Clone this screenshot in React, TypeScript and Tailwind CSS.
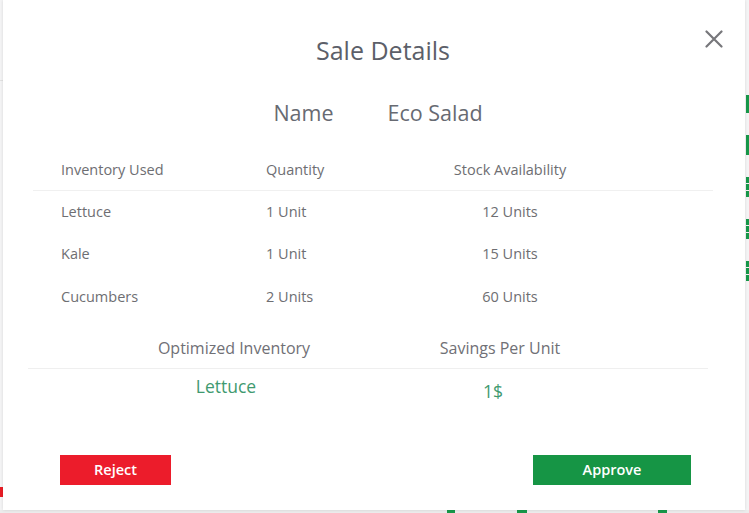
const rows = [
  { item: "Lettuce", qty: "1 Unit", stock: "12 Units" },
  { item: "Kale", qty: "1 Unit", stock: "15 Units" },
  { item: "Cucumbers", qty: "2 Units", stock: "60 Units" },
];

const SideMarks = () => (
  <div className="w-[4px] flex flex-col pt-[95px] gap-[22px]">
    <div className="h-[18px] w-[3px] ml-[1px] bg-[#17984a]" />
    <div className="h-[20px] w-[3px] ml-[1px] bg-[#17984a]" />
    <div className="h-[20px] w-[3px] ml-[1px] border-l-[3px] border-dashed border-[#17984a]" />
    <div className="h-[20px] w-[3px] ml-[1px] border-l-[3px] border-dashed border-[#17984a]" />
    <div className="h-[20px] w-[3px] ml-[1px] border-l-[3px] border-dashed border-[#17984a]" />
  </div>
);

export default function App() {
  return (
    <div
      className="w-[749px] h-[513px] overflow-hidden bg-[#f4f4f5] flex flex-col"
      style={{ fontFamily: '"Open Sans", "Liberation Sans", sans-serif' }}
    >
      <div className="flex h-[510px]">
        <div className="w-[3px] flex flex-col">
          <div className="mt-[80px] h-px bg-[#e2e2e2]" />
          <div className="mt-[406px] h-[10px] bg-[#e81c24]" />
        </div>
        <div className="relative w-[742px] h-[510px] bg-white shadow-[0_0_3px_rgba(0,0,0,0.12)] text-[#6e6e72] flex flex-col">
          {/* close */}
          <button className="absolute right-[22px] top-[30px] text-[#77777b]">
            <svg width="18" height="18" viewBox="0 0 18 18" fill="none" stroke="currentColor" strokeWidth="2.2" strokeLinecap="round">
              <path d="M1.5 1.5L16.5 16.5M16.5 1.5L1.5 16.5" />
            </svg>
          </button>

          <h1 className="pt-[33px] pl-[18px] text-center text-[25px] leading-[34px] text-[#5c5f69]">
            Sale Details
          </h1>

          <div className="mt-[32px] flex justify-center gap-[54px] text-[21.5px] leading-[28px] text-[#676a72] pl-[8px]">
            <span>Name</span>
            <span>Eco Salad</span>
          </div>

          <div className="mt-[22px] ml-[30px] mr-[32px]">
            <div className="flex items-center h-[42px] border-b border-[#f0f0f0] pl-[28px] text-[14.5px]">
              <span className="w-[205px]">Inventory Used</span>
              <span className="w-[174px]">Quantity</span>
              <span className="w-[140px] text-center">Stock Availability</span>
            </div>
            {rows.map((r, i) => (
              <div key={r.item} className={`flex items-center pl-[28px] text-[14.5px] ${i === 2 ? "h-[44px]" : "h-[42px]"}`}>
                <span className="w-[205px]">{r.item}</span>
                <span className="w-[174px]">{r.qty}</span>
                <span className="w-[140px] text-center">{r.stock}</span>
              </div>
            ))}
          </div>

          <div className="mt-[8px] ml-[25px] mr-[37px]">
            <div className="flex items-center h-[42px] border-b border-[#efefef] text-[16px] text-[#707076]">
              <span className="ml-[90px] w-[232px] text-center">Optimized Inventory</span>
              <span className="ml-[50px] w-[200px] text-center">Savings Per Unit</span>
            </div>
            <div className="flex text-[17.5px] leading-[24px] text-[#3f9a70] pt-[5px]">
              <span className="ml-[82px] w-[232px] text-center">Lettuce</span>
              <span className="ml-[51px] w-[200px] text-center pt-[5px]">1$</span>
            </div>
          </div>

          <div className="mt-[52px] flex justify-between pl-[57px] pr-[54px]">
            <button className="w-[111px] h-[30px] bg-[#ec1c2b] text-white text-[14.5px] font-semibold">
              Reject
            </button>
            <button className="w-[158px] h-[30px] bg-[#169545] text-white text-[14.5px] font-semibold">
              Approve
            </button>
          </div>
        </div>
        <SideMarks />
      </div>
      <div className="h-[3px] flex bg-[#ececec]">
        <div className="ml-[447px] w-[8px] bg-[#17984a]" />
        <div className="ml-[62px] w-[10px] bg-[#17984a]" />
        <div className="ml-[131px] w-[9px] bg-[#17984a]" />
      </div>
    </div>
  );
}
